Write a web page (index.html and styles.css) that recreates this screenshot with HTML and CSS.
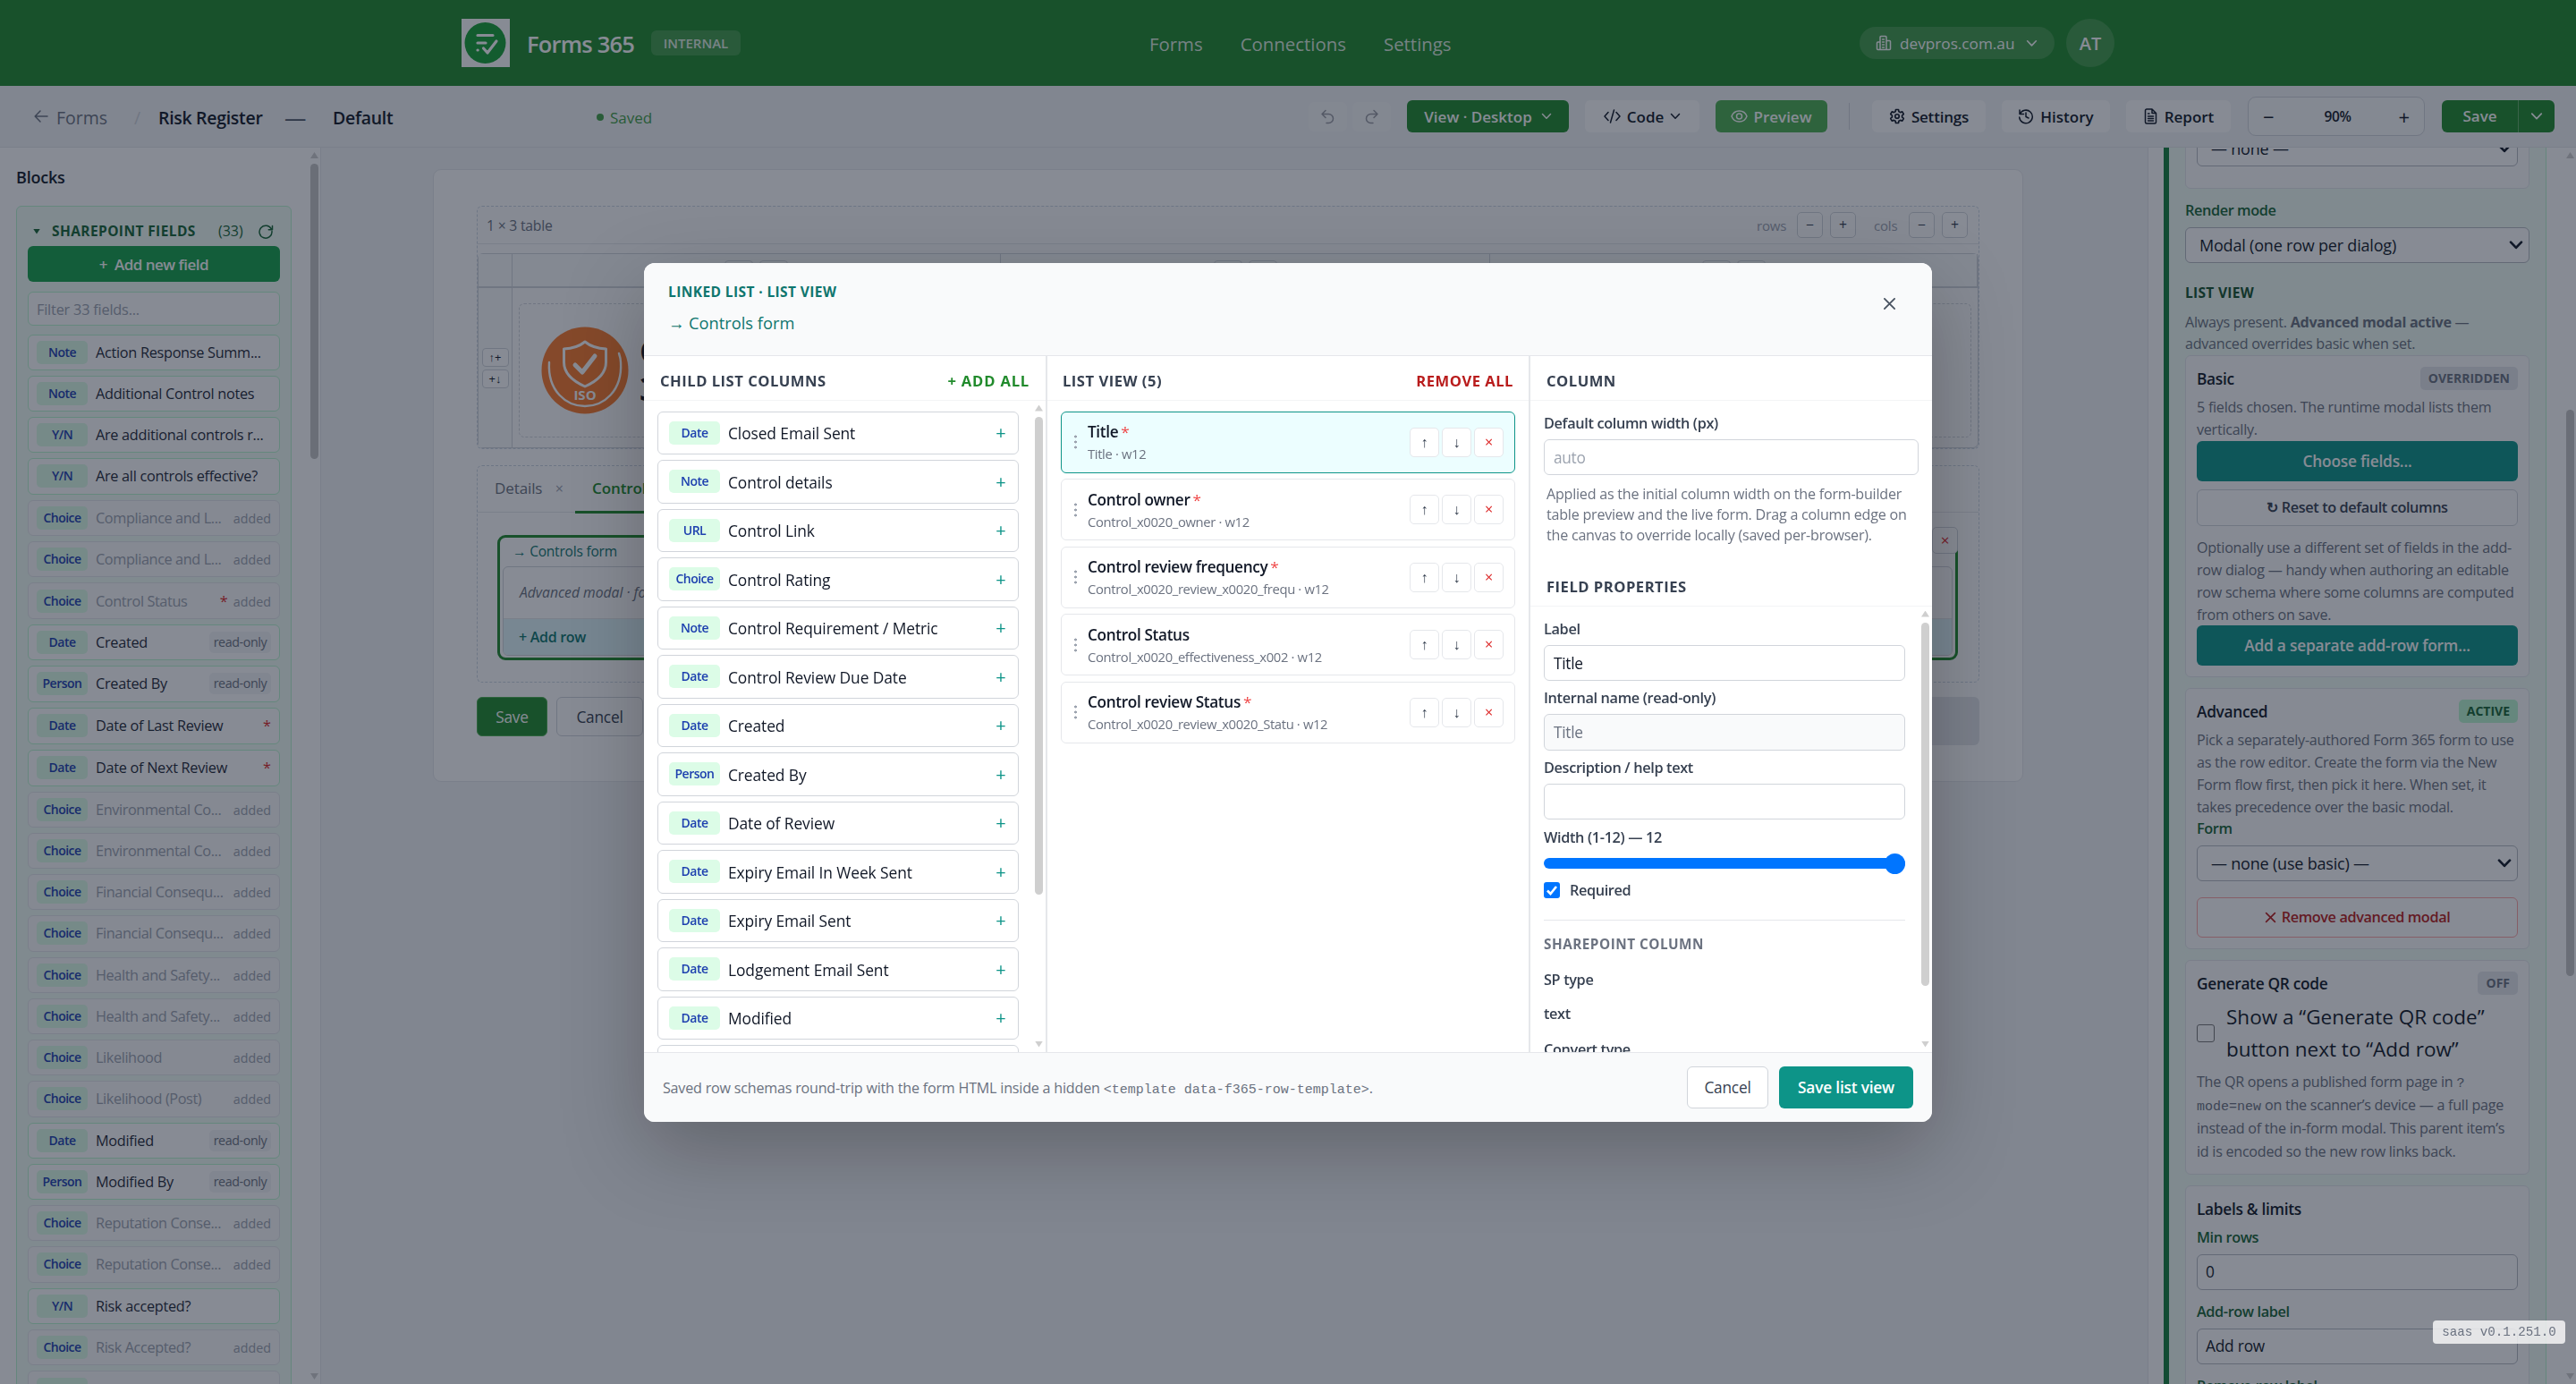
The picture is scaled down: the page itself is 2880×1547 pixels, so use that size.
FILE: index.html
```html
<!DOCTYPE html>
<html lang="en">
<head>
  <meta charset="UTF-8">
  <title>Forms 365 - Risk Register</title>
  <link rel="stylesheet" href="styles.css">
</head>
<body>
  <!-- shared icons -->
  <svg class="defs" width="0" height="0">
    <symbol id="i-chev" viewBox="0 0 12 12"><path d="M1.5 3.5 6 8.2l4.5-4.7" /></symbol>
    <symbol id="i-x" viewBox="0 0 12 12"><path d="M1.5 1.5l9 9M10.5 1.5l-9 9" /></symbol>
  </svg>

  <header class="top">
    <div class="brand">
      <svg class="logo" width="54" height="54" viewBox="0 0 54 54">
        <rect width="54" height="54" fill="#fff"/>
        <circle cx="26.5" cy="27" r="23" fill="#16a034"/>
        <g fill="none" stroke="#fff" stroke-width="3.2" stroke-linecap="round" stroke-linejoin="round">
          <path d="M18 18.500h17M18 27h9M18 35h.2M24.500 33l4.500 5 10-13"/>
        </g>
      </svg>
      <span class="brand-name">Forms 365</span>
      <span class="internal">INTERNAL</span>
    </div>
    <nav class="nav"><a>Forms</a><a>Connections</a><a>Settings</a></nav>
    <div class="account">
      <div class="tenant">
        <svg class="ico" width="18" height="18" viewBox="0 0 18 18"><path d="M5 16.500V2.500a1 1 0 0 1 1-1h5a1 1 0 0 1 1 1v14M5 8H2.500a1 1 0 0 0-1 1v6.500a1 1 0 0 0 1 1h13a1 1 0 0 0 1-1V7.500a1 1 0 0 0-1-1H12M7.500 5h2M7.500 8h2M7.500 11h2M7.500 14h2"/></svg>
        <span>devpros.com.au</span>
        <svg class="ico" width="13" height="13"><use href="#i-chev"/></svg>
      </div>
      <div class="avatar">AT</div>
    </div>
  </header>

  <div class="toolbar">
    <div class="crumbs">
      <svg class="ico" width="16" height="16" viewBox="0 0 16 16"><path d="M15 8H1.500M7 2 1.200 8 7 14"/></svg>
      <span class="back">Forms</span>
      <span class="slash">/</span>
      <b class="form-name">Risk Register</b>
      <span class="dash">—</span>
      <b class="view-name">Default</b>
      <span class="saved"><i></i>Saved</span>
    </div>
    <div class="tools">
      <span class="tbtn sq"><svg class="ico" width="17" height="17" viewBox="0 0 17 17"><path d="M6 1.500 2 5.500l4 4M2 5.500h7.500a5 5 0 0 1 0 10H7"/></svg></span>
      <span class="tbtn sq redo"><svg class="ico" width="17" height="17" viewBox="0 0 17 17"><path d="M11 1.500l4 4-4 4M15 5.500H7.500a5 5 0 0 0 0 10H10"/></svg></span>
      <span class="tbtn green view">View · Desktop <svg class="ico" width="12" height="12"><use href="#i-chev"/></svg></span>
      <span class="tbtn code"><svg class="ico" width="19" height="16" viewBox="0 0 19 16"><path d="M5 3.500 1 8l4 4.500M14 3.500 18 8l-4 4.500M11.500 1l-4 14"/></svg>Code <svg class="ico" width="12" height="12"><use href="#i-chev"/></svg></span>
      <span class="tbtn preview"><svg class="ico" width="19" height="16" viewBox="0 0 19 16"><path d="M1 8c1.500-4 5-6 8.500-6S16.500 4 18 8c-1.500 4-5 6-8.500 6S2.500 12 1 8z"/><circle cx="9.5" cy="8" r="3"/></svg>Preview</span>
      <span class="sep"></span>
      <span class="tbtn settings"><svg class="ico" width="18" height="18" viewBox="0 0 24 24"><path stroke-width="2.2" d="M10 2h4l.6 3 2.200 1.200 2.900-1 2 3.500-2.300 2v2.600l2.300 2-2 3.500-2.900-1L14.600 19l-.6 3h-4l-.6-3-2.200-1.200-2.900 1-2-3.500 2.300-2v-2.600l-2.300-2 2-3.500 2.900 1L9.400 5z"/><circle cx="12" cy="12" r="3" stroke-width="2.2"/></svg>Settings</span>
      <span class="tbtn history"><svg class="ico" width="18" height="18" viewBox="0 0 18 18"><path d="M2 2v4.500h4.500M2.300 6.500A7.300 7.300 0 1 1 1.700 10M9 5v4.500l3 1.500"/></svg>History</span>
      <span class="tbtn report"><svg class="ico" width="17" height="18" viewBox="0 0 17 18"><path d="M10 1H4a1.500 1.500 0 0 0-1.500 1.500v13A1.500 1.500 0 0 0 4 17h9a1.500 1.500 0 0 0 1.500-1.500V5.500zM10 1v4.500h4.500M5.500 9h6M5.500 11.500h6M5.500 14h6M5.500 6h1.500"/></svg>Report</span>
      <span class="zoomer"><span>−</span><em>90%</em><span>+</span></span>
      <span class="save-split"><b>Save</b><i><svg class="ico" width="14" height="14"><use href="#i-chev"/></svg></i></span>
    </div>
  </div>

  <main class="work">
    <aside class="blocks">
      <h2>Blocks</h2>
      <section class="sp">
        <div class="sp-head"><span class="tri"></span><b>SHAREPOINT FIELDS</b><span class="count">(33)</span>
          <svg class="ico" width="18" height="18" viewBox="0 0 18 18"><path d="M15.500 7.500A7 7 0 1 0 16 9.500M16.500 3.500v4.200h-4.200"/></svg></div>
        <div class="add-field">+&nbsp; Add new field</div>
        <div class="filter">Filter 33 fields...</div>
        <div class="fields">
          <div class="field"><i>Note</i><span>Action Response Summ...</span></div>
          <div class="field"><i>Note</i><span>Additional Control notes</span></div>
          <div class="field"><i>Y/N</i><span>Are additional controls r...</span></div>
          <div class="field"><i>Y/N</i><span>Are all controls effective?</span></div>
          <div class="field used"><i>Choice</i><span>Compliance and L...</span><small>added</small></div>
          <div class="field used"><i>Choice</i><span>Compliance and L...</span><small>added</small></div>
          <div class="field used req"><i>Choice</i><span>Control Status</span><u>*</u><small>added</small></div>
          <div class="field"><i>Date</i><span>Created</span><small class="ro">read-only</small></div>
          <div class="field"><i>Person</i><span>Created By</span><small class="ro">read-only</small></div>
          <div class="field req"><i>Date</i><span>Date of Last Review</span><u>*</u></div>
          <div class="field req"><i>Date</i><span>Date of Next Review</span><u>*</u></div>
          <div class="field used"><i>Choice</i><span>Environmental Co...</span><small>added</small></div>
          <div class="field used"><i>Choice</i><span>Environmental Co...</span><small>added</small></div>
          <div class="field used"><i>Choice</i><span>Financial Consequ...</span><small>added</small></div>
          <div class="field used"><i>Choice</i><span>Financial Consequ...</span><small>added</small></div>
          <div class="field used"><i>Choice</i><span>Health and Safety...</span><small>added</small></div>
          <div class="field used"><i>Choice</i><span>Health and Safety...</span><small>added</small></div>
          <div class="field used"><i>Choice</i><span>Likelihood</span><small>added</small></div>
          <div class="field used"><i>Choice</i><span>Likelihood (Post)</span><small>added</small></div>
          <div class="field"><i>Date</i><span>Modified</span><small class="ro">read-only</small></div>
          <div class="field"><i>Person</i><span>Modified By</span><small class="ro">read-only</small></div>
          <div class="field used"><i>Choice</i><span>Reputation Conse...</span><small>added</small></div>
          <div class="field used"><i>Choice</i><span>Reputation Conse...</span><small>added</small></div>
          <div class="field"><i>Y/N</i><span>Risk accepted?</span></div>
          <div class="field used"><i>Choice</i><span>Risk Accepted?</span><small>added</small></div>
          <div class="field used req"><i>Text</i><span>Risk Category</span><u>*</u><small>added</small></div>
        </div>
      </section>
      <div class="sbar"><span class="up"></span><span class="thumb blocks-thumb"></span><span class="down"></span></div>
    </aside>

    <div class="canvas">
      <div class="sheet">
        <div class="tbl">
          <div class="tbl-head"><span class="tbl-title">1 × 3 table</span><span class="lbl">rows</span><i>−</i><i>+</i><span class="lbl cols">cols</span><i>−</i><i>+</i></div>
          <div class="grid">
            <div class="corner"></div>
            <div class="colh"><i></i><i></i></div><div class="colh"><i></i><i></i></div><div class="colh"><i></i><i></i></div>
            <div class="rowh"><i>↑+</i><i>+↓</i></div>
            <div class="cell">
              <svg width="98" height="98" viewBox="0 0 98 98">
                <circle cx="49" cy="49" r="48.5" fill="#fb7b2c"/>
                <g fill="none" stroke="#fff" stroke-linecap="round" stroke-linejoin="round">
                  <path stroke-width="3" d="M49 17c6 5 14 7.500 23.500 8v15c0 13-10 21-23.500 27-13.500-6-23.500-14-23.500-27V25C35 24.500 43 22 49 17z"/>
                  <path stroke-width="5" d="M38 43l8 8 14-18"/>
                  <path stroke-width="2.4" d="M9 40C7 72 28 89 49 89s42-17 40-49c0-4-1-7-2-10"/>
                </g>
                <text x="49" y="82" class="iso">ISO</text>
              </svg>
              <div class="logo-text">C<br>3</div>
            </div>
          </div>
        </div>

        <div class="tabs">
          <div class="tab-row"><span class="tab">Details <small>×</small></span><span class="tab on">Controls</span></div>
          <div class="linked">
            <span class="del">×</span>
            <div class="linked-name">→ Controls form</div>
            <div class="linked-box">
              <div class="linked-msg">Advanced modal · form</div>
              <div class="linked-add">+ Add row</div>
            </div>
          </div>
        </div>
        <div class="actions"><span class="a-save">Save</span><span class="a-cancel">Cancel</span><span class="a-rest"></span></div>
      </div>
    </div>

    <aside class="props">
      <div class="props-in">
        <div class="card first"><div class="select">— none —<svg width="16" height="16"><use href="#i-chev"/></svg></div></div>
        <div class="glabel render">Render mode</div>
        <div class="select">Modal (one row per dialog)<svg width="16" height="16"><use href="#i-chev"/></svg></div>
        <div class="section">LIST VIEW</div>
        <p class="intro">Always present. <b>Advanced modal active</b> —<br>advanced overrides basic when set.</p>

        <div class="card">
          <div class="card-head"><b>Basic</b><em>OVERRIDDEN</em></div>
          <p class="lead">5 fields chosen. The runtime modal lists them<br>vertically.</p>
          <div class="btn teal">Choose fields...</div>
          <div class="btn plain">↻ Reset to default columns</div>
          <p class="opt">Optionally use a different set of fields in the add-<br>row dialog — handy when authoring an editable<br>row schema where some columns are computed<br>from others on save.</p>
          <div class="btn teal">Add a separate add-row form...</div>
        </div>

        <div class="card">
          <div class="card-head"><b>Advanced</b><em class="active">ACTIVE</em></div>
          <p class="lead">Pick a separately-authored Form 365 form to use<br>as the row editor. Create the form via the New<br>Form flow first, then pick it here. When set, it<br>takes precedence over the basic modal.</p>
          <div class="glabel">Form</div>
          <div class="select">— none (use basic) —<svg width="16" height="16"><use href="#i-chev"/></svg></div>
          <div class="btn danger"><svg class="ico" width="13" height="13"><use href="#i-x"/></svg> Remove advanced modal</div>
        </div>

        <div class="card">
          <div class="card-head"><b>Generate QR code</b><em>OFF</em></div>
          <div class="qr-row"><span class="box"></span><span>Show a “Generate QR code”<br>button next to “Add row”</span></div>
          <p class="qr-help">The QR opens a published form page in <code>?</code><br><code>mode=new</code> on the scanner’s device — a full page<br>instead of the in-form modal. This parent item’s<br>id is encoded so the new row links back.</p>
        </div>

        <div class="card">
          <div class="card-head"><b>Labels &amp; limits</b></div>
          <div class="glabel min">Min rows</div>
          <div class="input">0</div>
          <div class="glabel next">Add-row label</div>
          <div class="input">Add row</div>
          <div class="glabel next">Remove-row label</div>
        </div>
      </div>
      <div class="sbar"><span class="up"></span><span class="thumb props-thumb"></span><span class="down"></span></div>
    </aside>
  </main>

  <div class="overlay">
    <div class="modal">
      <div class="m-head">
        <div><div class="m-kicker">LINKED LIST · LIST VIEW</div><div class="m-title">→ Controls form</div></div>
        <svg class="ico" width="17" height="17"><use href="#i-x"/></svg>
      </div>
      <div class="m-body">
        <div class="m-col">
          <div class="c-head"><span>CHILD LIST COLUMNS</span><span class="addall">+ ADD ALL</span></div>
          <div class="c-list">
            <div class="child"><i>Date</i><span>Closed Email Sent</span><b>+</b></div>
            <div class="child"><i>Note</i><span>Control details</span><b>+</b></div>
            <div class="child"><i>URL</i><span>Control Link</span><b>+</b></div>
            <div class="child"><i>Choice</i><span>Control Rating</span><b>+</b></div>
            <div class="child"><i>Note</i><span>Control Requirement / Metric</span><b>+</b></div>
            <div class="child"><i>Date</i><span>Control Review Due Date</span><b>+</b></div>
            <div class="child"><i>Date</i><span>Created</span><b>+</b></div>
            <div class="child"><i>Person</i><span>Created By</span><b>+</b></div>
            <div class="child"><i>Date</i><span>Date of Review</span><b>+</b></div>
            <div class="child"><i>Date</i><span>Expiry Email In Week Sent</span><b>+</b></div>
            <div class="child"><i>Date</i><span>Expiry Email Sent</span><b>+</b></div>
            <div class="child"><i>Date</i><span>Lodgement Email Sent</span><b>+</b></div>
            <div class="child"><i>Date</i><span>Modified</span><b>+</b></div>
            <div class="child"></div>
          </div>
          <div class="sbar list-bar"><span class="up"></span><span class="thumb child-thumb"></span><span class="down"></span></div>
        </div>

        <div class="m-col">
          <div class="c-head"><span>LIST VIEW (5)</span><span class="rmall">REMOVE ALL</span></div>
          <div class="v-list">
            <div class="row sel"><span class="grip"></span><div class="r-txt"><b>Title<u>*</u></b><small>Title · w12</small></div><i>↑</i><i>↓</i><i class="rm">×</i></div>
            <div class="row"><span class="grip"></span><div class="r-txt"><b>Control owner<u>*</u></b><small>Control_x0020_owner · w12</small></div><i>↑</i><i>↓</i><i class="rm">×</i></div>
            <div class="row"><span class="grip"></span><div class="r-txt"><b>Control review frequency<u>*</u></b><small>Control_x0020_review_x0020_frequ · w12</small></div><i>↑</i><i>↓</i><i class="rm">×</i></div>
            <div class="row"><span class="grip"></span><div class="r-txt"><b>Control Status</b><small>Control_x0020_effectiveness_x002 · w12</small></div><i>↑</i><i>↓</i><i class="rm">×</i></div>
            <div class="row"><span class="grip"></span><div class="r-txt"><b>Control review Status<u>*</u></b><small>Control_x0020_review_x0020_Statu · w12</small></div><i>↑</i><i>↓</i><i class="rm">×</i></div>
          </div>
        </div>

        <div class="m-col">
          <div class="c-head"><span>COLUMN</span></div>
          <div class="f-top">
            <label>Default column width (px)</label>
            <div class="m-input ph">auto</div>
            <p>Applied as the initial column width on the form-builder<br>table preview and the live form. Drag a column edge on<br>the canvas to override locally (saved per-browser).</p>
          </div>
          <div class="c-head fp"><span>FIELD PROPERTIES</span></div>
          <div class="f-props">
            <label>Label</label>
            <div class="m-input">Title</div>
            <label>Internal name (read-only)</label>
            <div class="m-input ro">Title</div>
            <label>Description / help text</label>
            <div class="m-input"></div>
            <label>Width (1-12) — 12</label>
            <input type="range" min="1" max="12" value="12">
            <div class="reqd"><svg width="18" height="18" viewBox="0 0 18 18"><rect width="18" height="18" rx="3" fill="#0075ff"/><path d="M4 9.500l3.500 3.500L14 5" fill="none" stroke="#fff" stroke-width="2.6"/></svg>Required</div>
            <hr>
            <div class="sub">SHAREPOINT COLUMN</div>
            <label class="sp1">SP type</label>
            <label class="sp2">text</label>
            <label class="sp3">Convert type</label>
          </div>
          <div class="sbar prop-bar"><span class="up"></span><span class="thumb prop-thumb"></span><span class="down"></span></div>
        </div>
      </div>
      <div class="m-foot">
        <span class="note">Saved row schemas round-trip with the form HTML inside a hidden <code>&lt;template data-f365-row-template&gt;</code>.</span>
        <span class="m-cancel">Cancel</span>
        <span class="m-save">Save list view</span>
      </div>
    </div>
  </div>
  <div class="version">saas v0.1.251.0</div>
</body>
</html>
```

FILE: styles.css
```css
:root {
  --green: #218b2c;
  --teal: #0d9488;
  --text: #111827;
  --muted: #6b7280;
  --line: #e5e7eb;
  --line2: #d1d5db;
}

* {
  box-sizing: border-box;
}

body {
  margin: 0;
  width: 2880px;
  height: 1547px;
  overflow: hidden;
  display: flex;
  flex-direction: column;
  font-family: "Open Sans", "Noto Sans", sans-serif;
  font-size: 17px;
  color: var(--text);
  background: #f3f4f6;
}

i, em { font-style: normal; }
u { text-decoration: none; }
p { margin: 0; }
b { font-weight: 600; }
code { font-family: "Liberation Mono", monospace; line-height: 1; }
.defs { position: absolute; }

.ico, .select svg {
  fill: none;
  stroke: currentColor;
  stroke-width: 1.5;
  stroke-linecap: round;
  stroke-linejoin: round;
  flex: none;
}

/* header */
.top {
  height: 96px;
  flex: none;
  background: var(--green);
  color: #fff;
  display: grid;
  grid-template-columns: 769px 1fr 801px;
  padding-left: 516px;
  align-items: center;
}

.brand, .account, .nav { display: flex; align-items: center; }
.brand-name { font-size: 25.5px; font-weight: 600; width: 120px; margin: 1px 19px 0; letter-spacing: -0.8px; white-space: nowrap; }

.internal {
  width: 100px;
  height: 28px;
  line-height: 28px;
  text-align: center;
  border-radius: 6px;
  font-size: 15px;
  font-weight: 600;
  background: rgba(255,255,255,0.15);
  color: rgba(255,255,255,0.85);
}

.nav { font-size: 20.4px; gap: 42px; color: rgba(255,255,255,0.85); font-weight: 500; padding-top: 2px; }

.tenant {
  width: 218px;
  height: 36px;
  border-radius: 18px;
  background: rgba(255,255,255,0.15);
  display: flex;
  align-items: center;
  gap: 9px;
  padding-left: 18px;
  font-weight: 500;
}
.tenant span { width: 132px; font-size: 17.2px; padding-top: 1px; }

.avatar {
  width: 54px;
  height: 54px;
  margin-left: 13px;
  border-radius: 50%;
  background: rgba(255,255,255,0.15);
  display: grid;
  place-items: center;
  font-size: 20px;
  font-weight: 600;
}

/* toolbar */
.toolbar {
  height: 69px;
  flex: none;
  display: flex;
  justify-content: space-between;
  border-bottom: 1px solid var(--line);
  padding: 0 24px 0 38px;
  font-weight: 600;
}

.crumbs { display: flex; align-items: center; font-size: 19.5px; }
.crumbs .ico { color: var(--muted); }
.crumbs span, .crumbs b { padding-top: 2px; }
.back { width: 58px; margin-left: 9px; color: var(--muted); font-weight: 400; }
.slash { margin-left: 29px; width: 27px; color: var(--line2); font-weight: 400; }
.form-name { width: 141px; letter-spacing: -0.3px; }
.dash { width: 54px; color: #4b5563; transform: scaleX(1.25); transform-origin: left; }
.view-name { width: 295px; letter-spacing: -0.3px; }
.saved { font-size: 17px; font-weight: 400; color: #43a047; display: flex; align-items: center; gap: 7px; }
.saved i { width: 8px; height: 8px; border-radius: 50%; background: #43a047; }

.tools { display: flex; align-items: center; font-size: 17px; }

.tbtn {
  height: 36px;
  border-radius: 6px;
  background: #fff;
  display: flex;
  align-items: center;
  justify-content: center;
  gap: 7px;
  margin-left: 18px;
}
.tbtn.sq { width: 43px; height: 33px; margin-left: 0; opacity: 0.4; background: #fff; }
.tbtn.redo { margin-left: 6px; }
.tbtn.view { width: 181px; gap: 10px; }
.tbtn.code { width: 128px; }
.tbtn.preview { width: 125px; background: #4caf50; color: #fff; gap: 6px; }
.tbtn.settings { width: 127px; margin-left: 25px; letter-spacing: -0.2px; }
.tbtn.history { width: 121px; }
.tbtn.report { width: 117px; }
.tbtn.green { background: var(--green); color: #fff; }
.sep { width: 1px; height: 30px; background: var(--line2); margin-left: 24px; }

.zoomer {
  width: 198px;
  height: 44px;
  margin-left: 19px;
  border: 1px solid var(--line2);
  border-radius: 9px;
  background: #f9fafb;
  display: flex;
  align-items: center;
  justify-content: space-between;
  padding: 0 16px;
}
.zoomer span { font-size: 22px; font-weight: 400; }
.zoomer em { font-size: 15.5px; margin-left: 3px; letter-spacing: -0.4px; }

.save-split { height: 36px; width: 126px; margin-left: 19px; display: flex; color: #fff; background: var(--green); border-radius: 6px; }
.save-split b { width: 86px; line-height: 36px; text-align: center; border-right: 1px solid rgba(255,255,255,0.3); }
.save-split i { flex: 1; display: grid; place-items: center; }

.work { flex: 1; min-height: 0; display: flex; }

/* scrollbars */
.sbar {
  position: absolute;
  top: 0;
  right: 2px;
  bottom: 0;
  width: 9px;
}
.sbar span { position: absolute; left: 0; width: 9px; }
.sbar .thumb { border-radius: 5px; background: #cfcfcf; }
.sbar .up { top: 5px; height: 7px; background: #cfcfcf; clip-path: polygon(50% 0, 100% 100%, 0 100%); }
.sbar .down { bottom: 5px; height: 7px; background: #cfcfcf; clip-path: polygon(0 0, 100% 0, 50% 100%); }
.blocks-thumb { top: 18px; height: 330px; }
.props-thumb { top: 293px; height: 633px; }
.blocks .thumb, .props .thumb { background: #c4c4c4; }

/* blocks sidebar */
.blocks {
  position: relative;
  width: 359px;
  flex: none;
  overflow: hidden;
  background: #fff;
  border-right: 1px solid var(--line);
  padding: 20px 32px 0 18px;
}
.blocks h2 { margin: 0 0 18px; font-size: 18px; line-height: 27px; font-weight: 600; letter-spacing: -0.2px; }

.sp { border: 1px solid #bbf7d0; border-radius: 6px; background: #f0fdf4; padding: 13px 12px 0; height: 1400px; }
.sp-head { display: flex; align-items: center; height: 28px; color: #166534; margin-bottom: 3px; }
.sp-head .tri { width: 8px; height: 6px; margin: 1px 13px 0 6px; background: currentColor; clip-path: polygon(0 0, 100% 0, 50% 100%); }
.sp-head b { width: 186px; font-size: 15.5px; font-weight: 700; letter-spacing: 0.4px; white-space: nowrap; }
.sp-head .count { width: 44px; font-size: 16px; }

.add-field { height: 40px; border-radius: 6px; background: #16a34a; color: #fff; font-weight: 600; text-align: center; line-height: 41px; letter-spacing: -0.5px; }
.filter { height: 38px; margin: 11px 0 9.5px; border: 1px solid #bbf7d0; border-radius: 6px; background: #fff; line-height: 38px; padding-left: 9px; font-size: 16.3px; letter-spacing: -0.2px; color: #9ca3af; }

.fields { display: flex; flex-direction: column; gap: 6px; }
.field {
  height: 40.25px;
  flex: none;
  border: 1px solid #bbf7d0;
  border-radius: 6px;
  background: #fff;
  display: flex;
  align-items: center;
  padding: 0 9px;
  font-size: 16.3px;
  color: #1f2937;
  font-weight: 500;
}
.field.req { height: 41px; }
.field.used { border-color: var(--line); background: #fafafa; color: #9ca3af; }
.field i, .child i {
  width: 57px;
  height: 26px;
  flex: none;
  line-height: 26px;
  text-align: center;
  border-radius: 5px;
  background: #dcfce7;
  color: #1e40af;
  font-size: 14px;
  font-weight: 600;
  letter-spacing: -0.5px;
}
.field span { flex: 1; margin-left: 9px; white-space: nowrap; letter-spacing: -0.3px; }
.field.used span { letter-spacing: -0.4px; }
.field small { font-size: 14.3px; font-weight: 400; color: #9ca3af; margin-left: 6px; padding-top: 1px; }
.field .ro { background: #f3f4f6; border-radius: 5px; color: var(--muted); width: 69px; height: 24px; line-height: 22px; text-align: center; letter-spacing: -0.4px; }
.field u { color: #dc2626; margin-left: 6px; }

/* form canvas */
.canvas { flex: 1; min-width: 0; padding: 24px 139px 0 125px; }
.sheet { height: 685px; border: 1px solid var(--line); border-radius: 9px; background: #fff; padding: 40px 48px 0 48px; }

.tbl { height: 272px; border: 1.5px dashed #cbd5e1; border-radius: 6px; background: #fcfcfd; }
.tbl-head { height: 42px; border-bottom: 1px solid var(--line); display: flex; align-items: center; padding: 0 12px 0 10px; font-size: 15.7px; letter-spacing: -0.2px; color: var(--muted); }
.tbl-title { flex: 1; }
.tbl-head .lbl { width: 45px; font-size: 15px; color: #9ca3af; }
.tbl-head .cols { margin-left: 12px; width: 39px; }
.tbl-head i { width: 29px; height: 29px; margin-right: 8px; border: 1px solid var(--line2); border-radius: 5px; background: #fff; line-height: 26px; text-align: center; color: #374151; }
.tbl-head i:last-child { margin-right: 0; }

.grid {
  margin-top: 10px;
  height: 218px;
  border: 1px solid var(--line2);
  border-radius: 6px;
  display: grid;
  grid-template-columns: 38px 546px 547px 1fr;
  grid-template-rows: 38px 1fr;
}
.corner, .colh { border-right: 1px solid var(--line2); border-bottom: 2px solid var(--line2); background: #f9fafb; }
.colh { display: flex; justify-content: center; gap: 7px; padding-top: 7px; }
.colh i { width: 32px; height: 24px; border: 1px solid var(--line2); border-radius: 4px; }
.rowh { border-right: 1px solid var(--line2); background: #f9fafb; display: flex; flex-direction: column; align-items: center; justify-content: center; gap: 3px; }
.rowh i { width: 30px; height: 21px; border: 1px solid var(--line2); border-radius: 4px; background: #fff; font-size: 13px; line-height: 18px; text-align: center; }
.cell { grid-column: 2 / 5; margin: 17px 7px 11px; border: 1px dashed var(--line2); border-radius: 6px; display: flex; align-items: center; padding-left: 24px; }
.iso { font: 700 15px "Open Sans", sans-serif; fill: #fff; text-anchor: middle; }
.logo-text { margin-left: 12px; font-size: 36px; line-height: 42px; font-weight: 700; }

.tabs { height: 243px; margin-top: 18px; border: 1.5px dashed #cbd5e1; border-radius: 6px; }
.tab-row { height: 52px; border-bottom: 1px solid var(--line); display: flex; }
.tab { width: 109px; padding-left: 19px; line-height: 50px; letter-spacing: -0.1px; color: var(--muted); }
.tab small { margin-left: 10px; font-size: 16px; color: #9ca3af; }
.tab.on { height: 53px; color: var(--green); font-weight: 600; border-bottom: 3px solid var(--green); }

.linked { position: relative; height: 140px; margin: 25px 23px 0 22px; border: 3px solid var(--green); border-radius: 9px; padding: 0 3px; }
.linked-name { height: 32px; line-height: 30px; padding-left: 11px; font-size: 15.5px; letter-spacing: -0.2px; color: #0f766e; }
.linked-box { height: 100px; border: 1px solid var(--line2); border-radius: 6px; overflow: hidden; }
.linked-msg { height: 57px; line-height: 57px; padding-left: 18px; font-size: 15.7px; font-style: italic; color: var(--muted); }
.linked-add { height: 42px; line-height: 40px; padding-left: 17px; font-size: 16px; font-weight: 600; letter-spacing: -0.3px; color: #0f766e; background: #e0f7fa; border-top: 1px solid var(--line); }
.del { position: absolute; top: -12px; right: -3px; width: 29px; height: 30px; border: 1px solid var(--line2); border-radius: 5px; background: #fff; color: #dc2626; text-align: center; line-height: 27px; }

.actions { display: flex; margin-top: 16px; height: 54px; }
.a-save, .a-cancel { height: 44px; line-height: 43px; border-radius: 6px; text-align: center; font-size: 17.3px; letter-spacing: -0.2px; }
.a-save { width: 79px; background: var(--green); color: #fff; border: 1px solid #4caf50; }
.a-cancel { width: 97px; margin: 0 60px 0 10px; border: 1px solid var(--line2); color: #374151; }
.a-rest { flex: 1; background: #e5e7eb; border-radius: 6px; }

/* properties panel */
.props {
  position: relative;
  width: 479px;
  flex: none;
  overflow: hidden;
  background: #fff;
  border-left: 1px solid var(--line);
  padding-left: 17px;
}
.props .sbar { right: 2px; }
.props-in { width: 428px; height: 1500px; margin-top: -38px; background: #f0fdf4; border-left: 6px solid #15803d; border-right: 1px solid #bbf7d0; padding: 0 18px; }
.props p { font-size: 16.1px; letter-spacing: -0.25px; color: var(--muted); white-space: nowrap; line-height: 25px; }
.props code { font-size: 15px; letter-spacing: 0; line-height: 0; }

.card { margin-bottom: 12px; border: 1px solid var(--line); border-radius: 6px; background: #fcfcfd; padding: 12px; }
.card.first { height: 84px; margin: 0; padding-top: 18px; }
.card-head { height: 27px; display: flex; justify-content: space-between; align-items: center; font-size: 17.3px; letter-spacing: -0.3px; }
.card-head em { height: 26px; line-height: 26px; padding: 0 9px; border-radius: 5px; background: #e5e7eb; font-size: 14px; font-weight: 700; color: var(--muted); letter-spacing: 0; }
.card-head .active { background: #bbf7d0; color: #166534; }

.select, .input { height: 40px; border: 1px solid #b6bac2; border-radius: 6px; background: #fff; line-height: 38px; padding: 0 6px 0 15px; font-size: 18px; letter-spacing: -0.2px; display: flex; justify-content: space-between; align-items: center; }
.select svg { stroke-width: 2; }
.input { padding-left: 9px; font-size: 17.3px; }
.glabel { height: 23px; line-height: 23px; margin-bottom: 7px; font-size: 16.3px; font-weight: 600; color: #166534; letter-spacing: -0.4px; }
.render { margin-top: 13px; }
.min { margin-top: 7px; }
.next { margin-top: 13px; }
.section { margin-top: 21px; height: 24px; line-height: 24px; font-size: 15.5px; font-weight: 700; color: #14532d; letter-spacing: 0.3px; }
.props .intro { line-height: 24.3px; margin-top: 9px; }
.intro b { font-weight: 700; letter-spacing: -0.3px; }
.lead { margin-top: 6px; }
.props .opt { margin: 12px 0 -1px; }

.btn { height: 45px; border-radius: 6px; display: flex; align-items: center; justify-content: center; gap: 6px; font-weight: 600; letter-spacing: -0.2px; font-size: 17.3px; }
.teal { background: var(--teal); color: #fff; }
.plain { height: 41px; margin-top: 9px; border: 1px solid var(--line2); background: #fff; font-size: 16.3px; letter-spacing: -0.4px; color: #374151; }
.danger { margin-top: 18px; border: 1px solid #fca5a5; background: #fff; font-size: 16.3px; letter-spacing: -0.4px; color: #b91c1c; }

.qr-row { display: flex; align-items: center; gap: 13px; margin-top: 6px; font-size: 22.5px; line-height: 36px; white-space: nowrap; }
.box { width: 20px; height: 20px; border: 1.5px solid #767676; border-radius: 3px; background: #fff; }
.props .qr-help { margin-top: 5px; line-height: 26.1px; }

/* modal */
.overlay { position: fixed; inset: 0; background: rgba(15,23,42,0.5); display: flex; align-items: center; justify-content: center; }
.modal { width: 1440px; height: 960px; border-radius: 12px; overflow: hidden; background: #fff; display: flex; flex-direction: column; box-shadow: 0 30px 90px rgba(0,0,0,0.25); }

.m-head { height: 104px; flex: none; background: #f9fafb; border-bottom: 1px solid var(--line); display: flex; justify-content: space-between; padding: 20px 40px 0 27px; color: #0f766e; }
.m-kicker { font-size: 15.5px; line-height: 24px; font-weight: 700; letter-spacing: 0.4px; }
.m-title { font-size: 18.3px; line-height: 28px; margin-top: 9px; }
.m-head .ico { width: 15px; height: 15px; margin-top: 18px; color: #4b5563; }

.m-body { flex: 1; min-height: 0; display: grid; grid-template-columns: 451px 540px 449px; }
.m-col { position: relative; overflow: hidden; border-right: 2px solid var(--line); }
.m-col:last-child { border-right: 0; }
.c-head { height: 50px; border-bottom: 1px solid #f3f4f6; display: flex; justify-content: space-between; padding: 0 18px; line-height: 56px; font-size: 16.6px; font-weight: 700; letter-spacing: 0.5px; color: #374151; }
.m-col:nth-child(2) .c-head { padding: 0 17px; }
.addall { color: var(--green); letter-spacing: 0.8px; }
.rmall { color: #b91c1c; }

.c-list { padding: 12px 30px 0 15px; display: flex; flex-direction: column; gap: 6px; }
.child { height: 48.5px; flex: none; border: 1px solid var(--line2); border-radius: 6px; display: flex; align-items: center; padding: 0 13px 0 12px; font-size: 17.4px; }
.child span { flex: 1; margin-left: 9px; padding-top: 1px; letter-spacing: -0.1px; }
.child b { color: var(--teal); font-size: 20px; font-weight: 500; width: 12px; line-height: 32px; padding-top: 1px; text-align: center; }
.list-bar { top: 50px; right: 3px; }
.child-thumb { top: 18px; height: 534px; }

.v-list { padding: 12px 15px 0 15px; display: flex; flex-direction: column; gap: 6.6px; }
.row { height: 69px; border: 1px solid var(--line); border-radius: 6px; display: flex; align-items: center; padding: 0 12px 0 14px; }
.row.sel { background: #ecfeff; border-color: var(--teal); }
.grip { width: 3px; height: 18px; background: radial-gradient(circle, #9ca3af 1.3px, transparent 1.7px) 0 0 / 3px 6px; }
.r-txt { flex: 1; margin-left: 12px; padding-top: 1px; }
.r-txt b { display: block; font-size: 17.2px; line-height: 25px; letter-spacing: -0.35px; }
.r-txt u { color: #ef4444; margin-left: 3px; font-weight: 400; }
.r-txt small { display: block; font-size: 14.8px; line-height: 24px; color: var(--muted); letter-spacing: -0.35px; }
.row i { width: 33px; height: 33px; margin-left: 3px; border: 1px solid var(--line); border-radius: 5px; background: #fff; text-align: center; line-height: 31px; font-size: 16px; color: #374151; }
.row .rm { color: #dc2626; }

.f-top { padding: 12px 15px 0; height: 180px; }
label { display: block; height: 26px; line-height: 26px; font-size: 16.3px; font-weight: 600; color: #374151; letter-spacing: -0.35px; }
.f-top p { margin: 10px 0 0 3px; font-size: 16.1px; line-height: 23.2px; color: var(--muted); letter-spacing: -0.23px; white-space: nowrap; }
.m-input { height: 40.5px; border: 1px solid var(--line2); border-radius: 6px; line-height: 39px; padding-left: 10px; font-size: 17.3px; letter-spacing: -0.3px; }
.f-top .m-input { margin-top: 5px; }
.ph { color: #9ca3af; }
.m-input.ro { background: #f9fafb; color: var(--muted); }
.f-props { padding: 12px 30px 0 15px; }
.f-props .m-input { margin: 5px 0 6.2px; }

input[type=range] { appearance: none; display: block; width: 404px; height: 23px; margin: 5px 0 9px; background: none; }
input[type=range]::-webkit-slider-runnable-track { height: 12px; border-radius: 6px; background: #0075ff; }
input[type=range]::-webkit-slider-thumb { appearance: none; width: 23px; height: 23px; margin-top: -5.5px; border-radius: 50%; background: #0075ff; }

.reqd { display: flex; align-items: center; gap: 11px; height: 18px; font-size: 16.3px; font-weight: 600; letter-spacing: -0.4px; color: #374151; }
hr { height: 1px; border: 0; background: var(--line); margin: 24px 0 14px; }
.sub { height: 24px; line-height: 24px; font-size: 15.3px; font-weight: 700; color: var(--muted); letter-spacing: 0.5px; }
.sp1 { margin-top: 15px; }
.sp2 { margin-top: 12px; }
.sp3 { margin-top: 14px; }
.prop-bar { top: 280px; right: 3px; }
.prop-thumb { top: 18px; height: 406px; }

.m-foot { height: 78px; flex: none; background: #f9fafb; border-top: 1px solid var(--line); display: flex; align-items: center; padding: 0 21px; }
.note { flex: 1; font-size: 16.1px; color: var(--muted); letter-spacing: -0.2px; padding-top: 1px; }
.note code { font-size: 15px; letter-spacing: 0; }
.m-cancel, .m-save { height: 47px; line-height: 46px; border-radius: 6px; text-align: center; font-size: 17.3px; letter-spacing: -0.2px; }
.m-cancel { width: 91px; margin-right: 12px; border: 1px solid var(--line2); background: #fff; color: #374151; }
.m-save { width: 150px; line-height: 47px; background: var(--teal); color: #fff; font-weight: 600; }

.version { position: fixed; right: 12px; bottom: 45px; width: 148px; height: 26px; border-radius: 4px; background: rgba(255,255,255,0.78); font: 14.2px/26px "Liberation Mono", monospace; text-align: center; color: #6b7280; }
```
